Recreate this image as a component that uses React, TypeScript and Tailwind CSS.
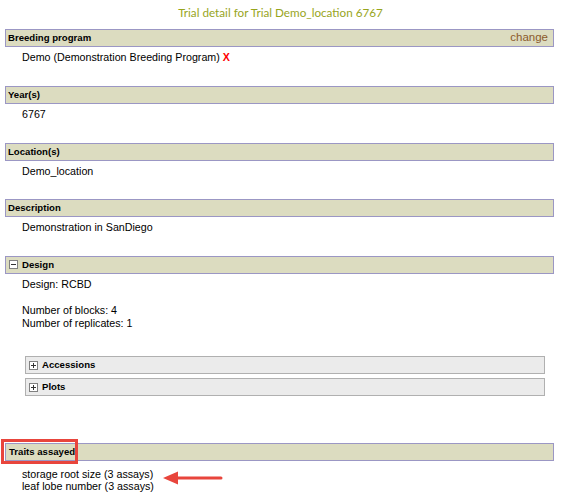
import type { ReactNode } from 'react';

// Trial detail page: khaki section bars with plain content below

const Toggle = ({ open }: { open: boolean }) => (
    <span className="inline-flex items-center justify-center w-[9px] h-[9px] border border-[#808080] bg-white mr-[4px] shrink-0">
        <svg width="7" height="7" viewBox="0 0 7 7">
            <rect x="1" y="3" width="5" height="1" fill="#333" />
            {!open && <rect x="3" y="1" width="1" height="5" fill="#333" />}
        </svg>
    </span>
);

const Bar = ({ children, right }: { children: ReactNode; right?: ReactNode }) => (
    <div className="ml-[5px] w-[549px] h-[18px] border border-[#9b97c4] bg-[#dcdcc0] flex items-center justify-between pl-[2px] pr-[5px]">
        <div className="flex items-center font-bold text-[9.6px]">{children}</div>
        {right}
    </div>
);

const Section = ({ title, children, right, tight }: { title: ReactNode; children: ReactNode; right?: ReactNode; tight?: boolean }) => (
    <div>
        <Bar right={right}>{title}</Bar>
        <div className={tight ? 'pl-[22px] pt-[4px] pb-[21px] leading-[13px]' : 'pl-[22px] pt-[4px] pb-[22px] leading-[13px]'}>{children}</div>
    </div>
);

const SubBox = ({ title }: { title: string }) => (
    <div className="ml-[25px] w-[520px] h-[18px] border border-[#b0b0b0] bg-[#ebebeb] flex items-center pl-[3px] font-bold text-[9.6px]">
        <Toggle open={false} />
        {title}
    </div>
);

export default function App() {
    return (
        <div className="relative w-[561px] h-[498px] overflow-hidden bg-white text-black text-[10.7px] font-['Liberation_Sans',Arial,sans-serif]">
            <div className="h-[29px] pt-[4px] text-center text-[11.7px] leading-[16px] text-[#98a51c] font-['Lato',sans-serif]">
                Trial detail for Trial Demo_location 6767
            </div>

            <Section title="Breeding program" right={<span className="text-[11.5px] text-[#8b5a2b]">change</span>}>
                Demo (Demonstration Breeding Program) <span className="text-[#ff0000] font-bold">X</span>
            </Section>

            <Section title="Year(s)">6767</Section>
            <Section title="Location(s)" tight>Demo_location</Section>
            <Section title="Description">Demonstration in SanDiego</Section>

            <div>
                <Bar>
                    <span className="ml-[1px]"><Toggle open={true} /></span>
                    Design
                </Bar>
                <div className="pl-[22px] pt-[4px] leading-[13px]">
                    <div>Design: RCBD</div>
                    <div className="h-[13px]" />
                    <div>Number of blocks: 4</div>
                    <div>Number of replicates: 1</div>
                </div>
                <div className="mt-[26px] flex flex-col gap-[4px]">
                    <SubBox title="Accessions" />
                    <SubBox title="Plots" />
                </div>
            </div>

            <div className="mt-[47px]">
                <div className="relative">
                    <Bar>
                        <span className="ml-[1px]">Traits assayed</span>
                    </Bar>
                    <div className="absolute left-[1px] top-[-4px] w-[77px] h-[25px] border-[3px] border-[#e8453c]" />
                </div>
                <div className="pl-[22px] pt-[7px] leading-[12px]">
                    <div>storage root size (3 assays)</div>
                    <div>leaf lobe number (3 assays)</div>
                </div>
            </div>

            <svg className="absolute left-[162px] top-[470px]" width="62" height="16" viewBox="0 0 62 16">
                <line x1="12" y1="8" x2="59" y2="8" stroke="#e8453c" strokeWidth="3" strokeLinecap="round" />
                <polygon points="1,8 16,1.5 16,14.5" fill="#e8453c" />
            </svg>
        </div>
    );
}
